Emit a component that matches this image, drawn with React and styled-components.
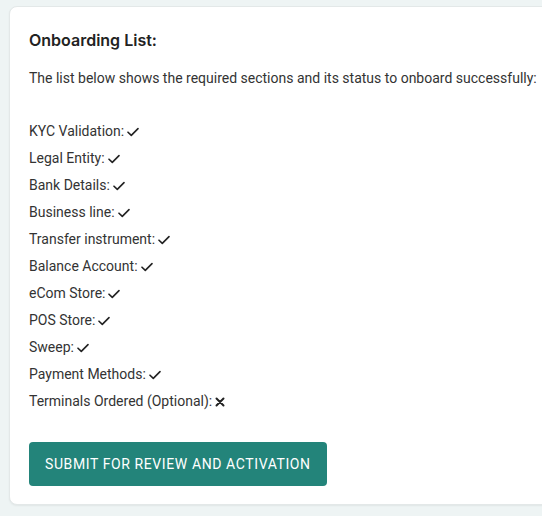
import React from "react";
import styled, { createGlobalStyle } from "styled-components";

const Global = createGlobalStyle`
  html, body {
    margin: 0;
    padding: 0;
    background: #eef4f4;
    overflow: hidden;
  }
`;

const items = [
  { label: "KYC Validation", done: true },
  { label: "Legal Entity", done: true },
  { label: "Bank Details", done: true },
  { label: "Business line", done: true },
  { label: "Transfer instrument", done: true },
  { label: "Balance Account", done: true },
  { label: "eCom Store", done: true },
  { label: "POS Store", done: true },
  { label: "Sweep", done: true },
  { label: "Payment Methods", done: true },
  { label: "Terminals Ordered (Optional)", done: false },
];

const Check = () => (
  <svg width="12" height="10" viewBox="0 0 12 10">
    <polyline
      points="1,5.2 4.3,8.4 11,1.6"
      fill="none"
      stroke="#222"
      strokeWidth="1.6"
      strokeLinecap="round"
      strokeLinejoin="round"
    />
  </svg>
);

const Cross = () => (
  <svg width="10" height="10" viewBox="0 0 10 10">
    <path
      d="M1.5 1.5 L8.5 8.5 M8.5 1.5 L1.5 8.5"
      stroke="#222"
      strokeWidth="2"
      strokeLinecap="round"
    />
  </svg>
);

const App = () => {
  return (
    <Page>
      <Global />
      <Card>
        <Title>Onboarding List:</Title>
        <Intro>
          The list below shows the required sections and its status to onboard
          successfully:
        </Intro>
        <List>
          {items.map((item) => (
            <Item key={item.label}>
              {item.label}:
              <Mark>{item.done ? <Check /> : <Cross />}</Mark>
            </Item>
          ))}
        </List>
        <Button>SUBMIT FOR REVIEW AND ACTIVATION</Button>
      </Card>
    </Page>
  );
};
export default App;

const Page = styled.div`
  width: 542px;
  height: 516px;
  padding: 6px 0 0 9px;
  box-sizing: border-box;
`;
const Card = styled.div`
  width: 560px;
  height: 499px;
  box-sizing: border-box;
  background: #ffffff;
  border: 1px solid #e3e8e8;
  border-radius: 8px;
  box-shadow: 0 1px 2px rgba(0, 0, 0, 0.06);
  padding: 23px 19px 0 19px;
  display: flex;
  flex-direction: column;
  align-items: flex-start;
`;
const Title = styled.div`
  font-family: Inter, "Noto Sans", sans-serif;
  font-weight: 600;
  font-size: 16px;
  line-height: 20px;
  color: #222;
`;
const Intro = styled.div`
  margin-top: 18px;
  font-family: Roboto, "Liberation Sans", sans-serif;
  font-size: 14px;
  line-height: 20px;
  color: #333;
  white-space: nowrap;
`;
const List = styled.div`
  margin-top: 30px;
  display: flex;
  flex-direction: column;
`;
const Item = styled.div`
  display: flex;
  align-items: center;
  font-family: Roboto, "Liberation Sans", sans-serif;
  font-size: 14px;
  line-height: 27px;
  color: #333;
`;
const Mark = styled.span`
  display: inline-flex;
  align-items: center;
  margin-left: 3px;
`;
const Button = styled.button`
  margin-top: 27px;
  height: 44px;
  padding: 0 16px;
  background: #23847a;
  border: none;
  border-radius: 4px;
  color: #ffffff;
  font-family: Roboto, "Liberation Sans", sans-serif;
  font-size: 14px;
  font-weight: 400;
  letter-spacing: 0.6px;
  cursor: pointer;
`;
